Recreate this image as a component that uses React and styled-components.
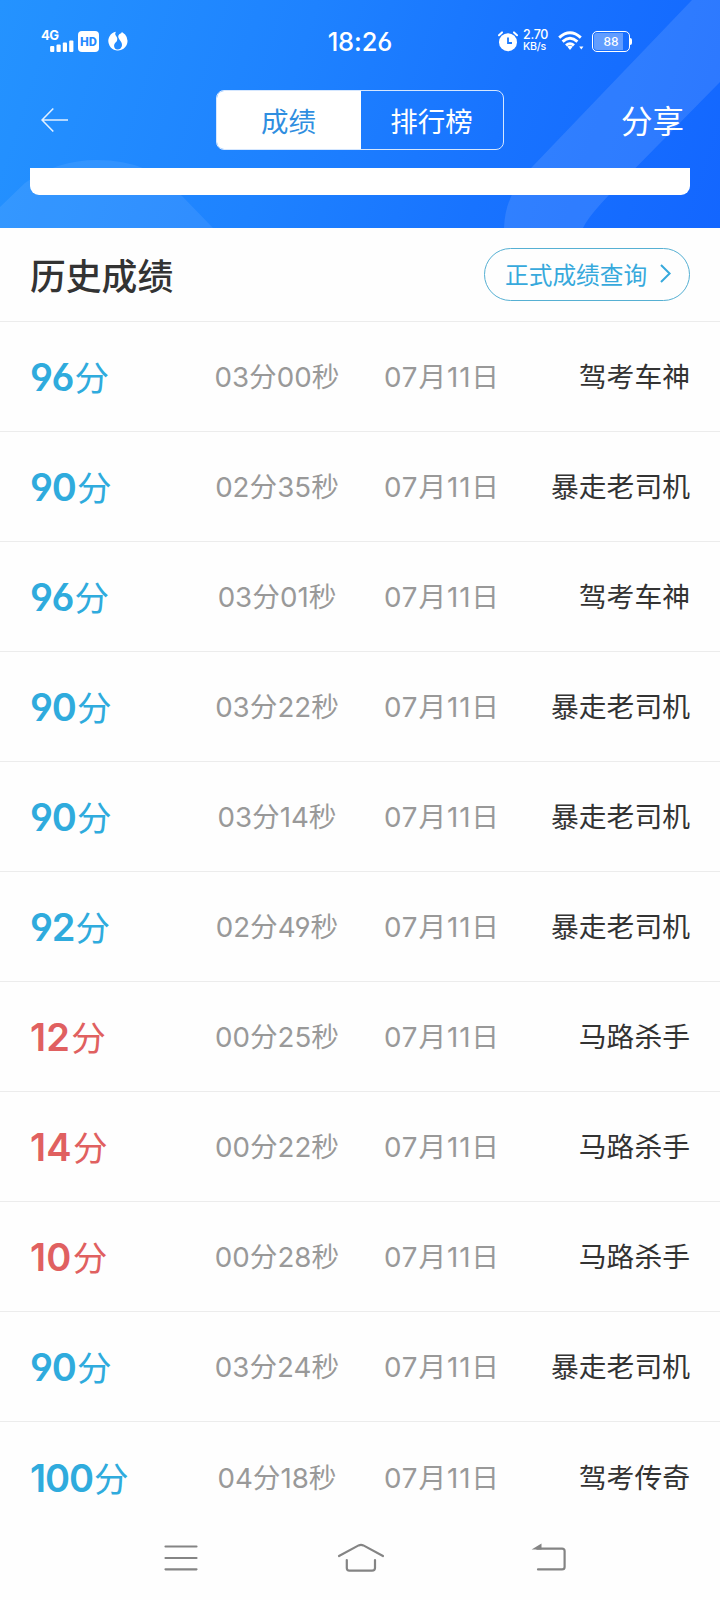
import React from 'react';
import styled, { createGlobalStyle } from 'styled-components';

const records = [
  { score: 96, time: '03分00秒', date: '07月11日', title: '驾考车神' },
  { score: 90, time: '02分35秒', date: '07月11日', title: '暴走老司机' },
  { score: 96, time: '03分01秒', date: '07月11日', title: '驾考车神' },
  { score: 90, time: '03分22秒', date: '07月11日', title: '暴走老司机' },
  { score: 90, time: '03分14秒', date: '07月11日', title: '暴走老司机' },
  { score: 92, time: '02分49秒', date: '07月11日', title: '暴走老司机' },
  { score: 12, time: '00分25秒', date: '07月11日', title: '马路杀手' },
  { score: 14, time: '00分22秒', date: '07月11日', title: '马路杀手' },
  { score: 10, time: '00分28秒', date: '07月11日', title: '马路杀手' },
  { score: 90, time: '03分24秒', date: '07月11日', title: '暴走老司机' },
  { score: 100, time: '04分18秒', date: '07月11日', title: '驾考传奇' },
];

export default function App() {
  return (
    <Page>
      <GlobalStyle />
      <Header>
        <HeaderShapes />
        <StatusBar />
        <NavBar>
          <BackButton aria-label="返回">
            <svg width="28" height="26" viewBox="0 0 28 26" fill="none" stroke="#e2f0ff" strokeWidth="1.6">
              <path d="M12.3 1.5 L1 13 L12.3 24.5 M1 13 H27" />
            </svg>
          </BackButton>
          <Tabs>
            <Tab $active>成绩</Tab>
            <Tab>排行榜</Tab>
          </Tabs>
          <ShareButton>分享</ShareButton>
        </NavBar>
        <CardEdge />
      </Header>
      <TitleRow>
        <Title>历史成绩</Title>
        <QueryButton>
          正式成绩查询
          <svg width="12" height="20" viewBox="0 0 12 20" fill="none" stroke="#37a9dc" strokeWidth="2">
            <path d="M1 1 L9.6 9.5 L1 18" />
          </svg>
        </QueryButton>
      </TitleRow>
      <List>
        {records.map((record, index) => (
          <Row key={index}>
            <Score $pass={record.score >= 90}>
              <ScoreNumber $spacing={record.score >= 90 ? '-1.1px' : '0.2px'}>
                {record.score}
              </ScoreNumber>
              分
            </Score>
            <Info>{record.time}</Info>
            <Info $spacing="0.9px">{record.date}</Info>
            <Rank>{record.title}</Rank>
          </Row>
        ))}
      </List>
      <SystemNav />
    </Page>
  );
}

function HeaderShapes() {
  return (
    <Shapes width="720" height="228" viewBox="0 0 720 228">
      <path d="M0 207 L25 183 Q57 160 97 160 Q151 160 181 195 L213 228 H0 Z" fill="#fff" fillOpacity="0.08" />
      <path
        d="M692 0 L532 167 Q505 193 504 228 H583 Q588 217 609 195 L720 82 V0 Z"
        fill="#fff"
        fillOpacity="0.11"
      />
    </Shapes>
  );
}

function StatusBar() {
  return (
    <Status>
      <StatusLeft>
        <Signal>
          <Network>4G</Network>
          <svg width="24" height="12" viewBox="0 0 24 12" fill="#fff">
            <rect x="0.1" y="6" width="4.2" height="6" rx="1" />
            <rect x="6.5" y="4.6" width="4.2" height="7.4" rx="1" />
            <rect x="12.8" y="2.6" width="4.2" height="9.4" rx="1" />
            <rect x="19.2" y="0.6" width="4.2" height="11.4" rx="1" />
          </svg>
        </Signal>
        <Hd>HD</Hd>
        <svg width="20" height="20" viewBox="0 0 20 20">
          <path
            d="M6 1.2 A9.6 9.6 0 1 0 17.1 3.6 L13.9 0.9 L13.2 2.3 C10.8 3.2 9.6 4.8 10.6 7.1 C11.9 10.1 14.7 11.2 13.7 15 C13 17.6 11.2 18.7 9.5 18.5 C6.8 18.2 5.8 16 6.5 13.8 C7.2 11.7 9.4 10.8 9.3 7.8 C9.3 5.8 7.7 5.1 7.3 3.4 C7.1 2.5 7.4 1.5 8 0.7 Z"
            fill="#fff"
          />
          <circle cx="10" cy="14.3" r="3.6" fill="#238bff" />
        </svg>
      </StatusLeft>
      <Clock>18:26</Clock>
      <StatusRight>
        <svg width="20" height="21" viewBox="0 0 20 21" fill="none">
          <circle cx="10" cy="11.2" r="9" fill="#fff" />
          <path d="M1 4.2 L4 1.4 M19 4.2 L16 1.4" stroke="#fff" strokeWidth="2" strokeLinecap="round" />
          <path d="M10 6.5 V12 H14" stroke="#1c7aff" strokeWidth="1.8" />
        </svg>
        <Speed>
          <SpeedValue>2.70</SpeedValue>
          <SpeedUnit>KB/s</SpeedUnit>
        </Speed>
        <svg width="26" height="20" viewBox="0 0 26 20" fill="none" stroke="#fff" strokeWidth="2.9">
          <path d="M1.2 6.6 Q12 -3.2 22.8 6.6" />
          <path d="M4.6 10.6 Q12 4 19.4 10.6" />
          <path d="M8 14.4 Q12 10.9 16 14.4" />
          <path d="M9.2 15.6 Q12 13.8 14.8 15.6 L12 19 Z" fill="#fff" stroke="none" />
          <path d="M21.2 15.6 H25.4 L23.3 18.6 Z" fill="#fff" stroke="none" />
        </svg>
        <Battery>
          <BatteryBody>88</BatteryBody>
          <BatteryTip />
        </Battery>
      </StatusRight>
    </Status>
  );
}

function SystemNav() {
  return (
    <BottomBar>
      <svg width="48" height="32" viewBox="0 0 48 32" fill="none" stroke="#848484" strokeWidth="2.2" strokeLinecap="round">
        <path d="M8.5 4.5 H39.5 M8.5 16 H39.5 M8.5 27.3 H39.5" />
      </svg>
      <svg width="48" height="32" viewBox="0 0 48 32" fill="none" stroke="#848484" strokeWidth="2.2" strokeLinecap="round">
        <path d="M2 14 L21.6 3.4 Q24 2.2 26.4 3.4 L46 14" />
        <path d="M9.8 18 V26 Q9.8 28.6 12.4 28.6 H35 Q38 28.6 38 26 V18" />
      </svg>
      <svg width="48" height="32" viewBox="0 0 48 32" fill="none" stroke="#848484" strokeWidth="2.2" strokeLinecap="round">
        <path d="M10 6.6 H35 Q37.6 6.6 37.6 9 V25 Q37.6 27.4 35 27.4 H11" />
        <path d="M4.6 7.6 L14.5 1.6 V7.6 Z" fill="#848484" stroke="none" />
      </svg>
    </BottomBar>
  );
}

const GlobalStyle = createGlobalStyle`
  * {
    box-sizing: border-box;
  }
  body {
    margin: 0;
    background-color: #fff;
  }
  svg {
    display: block;
    flex-shrink: 0;
  }
  button {
    border: none;
    padding: 0;
    background: none;
    font-family: inherit;
  }
`;

const Page = styled.div`
  width: 720px;
  height: 1600px;
  display: flex;
  flex-direction: column;
  overflow: hidden;
  background-color: #fefefe;
  font-family: Inter, 'Noto Sans CJK SC', sans-serif;
  font-feature-settings: 'cv03', 'cv04';
  color: #333;
`;

const Header = styled.header`
  position: relative;
  height: 228px;
  flex-shrink: 0;
  background: linear-gradient(108deg, #2493ff 0%, #1e82ff 40%, #1873ff 68%, #1366ff 100%);
  color: #fff;
`;

const Shapes = styled.svg`
  position: absolute;
  top: 0;
  left: 0;
`;

const Status = styled.div`
  position: relative;
  display: grid;
  grid-template-columns: 1fr 66px 1fr;
  align-items: center;
  height: 82px;
  padding: 0 41px;
`;

const StatusLeft = styled.div`
  display: flex;
  align-items: center;
`;

const Signal = styled.div`
  width: 37px;
  height: 22px;

  svg {
    margin-left: 9px;
  }
`;

const Network = styled.div`
  height: 10px;
  font-size: 13px;
  line-height: 10px;
  font-weight: 700;
  letter-spacing: -0.6px;
`;

const Hd = styled.div`
  width: 21px;
  height: 21px;
  margin-right: 9px;
  border-radius: 4px;
  background-color: #fff;
  color: #2389ff;
  font-family: Roboto, sans-serif;
  font-size: 12.5px;
  line-height: 21px;
  font-weight: 800;
  text-align: center;
`;

const Clock = styled.div`
  font-size: 25.5px;
  font-weight: 500;
  letter-spacing: -0.1px;
  text-align: center;
  white-space: nowrap;
`;

const StatusRight = styled.div`
  display: flex;
  align-items: center;
  justify-content: flex-end;
  padding-right: 47px;
`;

const Speed = styled.div`
  width: 40px;
  padding-left: 5px;
`;

const SpeedValue = styled.div`
  font-size: 12.5px;
  line-height: 12px;
  font-weight: 500;
  letter-spacing: -0.3px;
`;

const SpeedUnit = styled.div`
  font-size: 10.6px;
  line-height: 12px;
  font-weight: 500;
  letter-spacing: -0.2px;
`;

const Battery = styled.div`
  display: flex;
  align-items: center;
  margin-left: 8px;
`;

const BatteryBody = styled.div`
  width: 38px;
  height: 21px;
  border: 1.5px solid #fff;
  border-radius: 5px;
  background: linear-gradient(90deg, rgba(255, 255, 255, 0.32) 84%, transparent 84%) content-box;
  padding: 1px;
  font-size: 12px;
  line-height: 17px;
  font-weight: 500;
  text-align: center;
`;

const BatteryTip = styled.div`
  width: 2px;
  height: 7px;
  border-radius: 0 2px 2px 0;
  background-color: #fff;
`;

const NavBar = styled.nav`
  position: relative;
  display: grid;
  grid-template-columns: 1fr 288px 1fr;
  align-items: center;
  height: 76px;
  margin-bottom: 10px;
  padding: 0 36px 0 41px;
`;

const BackButton = styled.button`
  justify-self: start;
`;

const Tabs = styled.div`
  display: flex;
  width: 288px;
  height: 60px;
  margin-left: -3px;
  border: 1.5px solid #d5e7ff;
  border-radius: 8px;
  overflow: hidden;
`;

const Tab = styled.div`
  width: ${({ $active }) => ($active ? '144px' : '142px')};
  padding-top: 2px;
  background-color: ${({ $active }) => ($active ? '#fff' : 'transparent')};
  color: ${({ $active }) => ($active ? '#2f8ee0' : '#fff')};
  font-size: 27.5px;
  line-height: 58px;
  text-align: center;
`;

const ShareButton = styled.button`
  padding-top: 3px;
  justify-self: end;
  color: #fff;
  font-size: 31.5px;
  line-height: 60px;
`;

const CardEdge = styled.div`
  position: relative;
  height: 27px;
  margin: 0 30px;
  border-radius: 0 0 9px 9px;
  background-color: #fff;
`;

const TitleRow = styled.div`
  display: flex;
  align-items: center;
  justify-content: space-between;
  height: 94px;
  flex-shrink: 0;
  padding: 0 30px;
  border-bottom: 1px solid #ececec;
`;

const Title = styled.h1`
  margin: 5px 0 0;
  font-size: 35.8px;
  line-height: 48px;
  font-weight: 500;
`;

const QueryButton = styled.button`
  display: flex;
  align-items: center;
  justify-content: space-between;
  width: 206px;
  height: 53px;
  padding: 0 17px 2px 20px;
  border: 1px solid #56b0d3;
  border-radius: 27px;
  color: #37a9dc;
  font-size: 23.7px;
  white-space: nowrap;
`;

const List = styled.div`
  flex-shrink: 0;
`;

const Row = styled.div`
  display: grid;
  grid-template-columns: 165px 164px 166px 1fr;
  align-items: center;
  height: 110px;
  padding: 1px 30px 0;
  border-bottom: 1px solid #ececec;
  line-height: 40px;
  white-space: nowrap;

  &:last-child {
    border-bottom: none;
  }
`;

const Score = styled.div`
  display: flex;
  align-items: baseline;
  margin-top: 1px;
  color: ${({ $pass }) => ($pass ? '#2fabdd' : '#e06060')};
  font-size: 34.6px;
`;

const ScoreNumber = styled.span`
  margin-right: 1.2px;
  font-size: 38px;
  font-weight: 600;
  letter-spacing: ${({ $spacing }) => $spacing};
`;

const Info = styled.div`
  color: #999;
  font-size: 27.7px;
  letter-spacing: ${({ $spacing }) => $spacing || 'normal'};
  text-align: center;
`;

const Rank = styled.div`
  font-size: 27.8px;
  text-align: right;
`;

const BottomBar = styled.div`
  display: flex;
  justify-content: space-between;
  padding: 10px 145px 0 157px;

  svg:nth-child(2) {
    margin: 0 5px 0 -5px;
  }
`;
